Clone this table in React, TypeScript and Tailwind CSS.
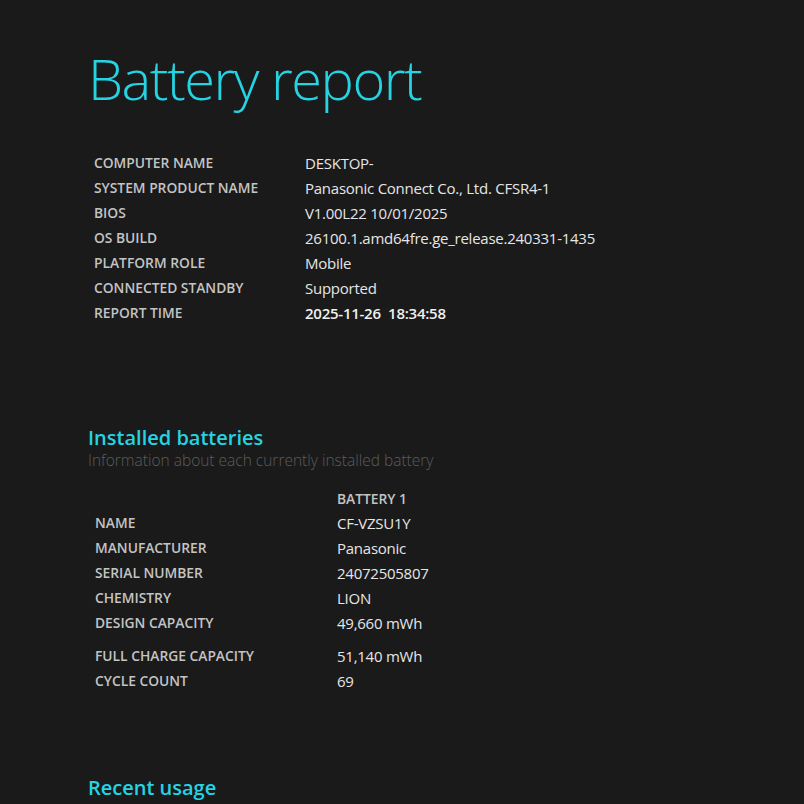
const systemInfo = [
  { label: "COMPUTER NAME", value: "DESKTOP-" },
  { label: "SYSTEM PRODUCT NAME", value: "Panasonic Connect Co., Ltd. CFSR4-1" },
  { label: "BIOS", value: "V1.00L22 10/01/2025" },
  { label: "OS BUILD", value: "26100.1.amd64fre.ge_release.240331-1435" },
  { label: "PLATFORM ROLE", value: "Mobile" },
  { label: "CONNECTED STANDBY", value: "Supported" },
];

const batteryInfo = [
  { label: "NAME", value: "CF-VZSU1Y" },
  { label: "MANUFACTURER", value: "Panasonic" },
  { label: "SERIAL NUMBER", value: "24072505807" },
  { label: "CHEMISTRY", value: "LION" },
  { label: "DESIGN CAPACITY", value: "49,660 mWh" },
];

const capacityInfo = [
  { label: "FULL CHARGE CAPACITY", value: "51,140 mWh" },
  { label: "CYCLE COUNT", value: "69" },
];

function Row({ label, value, labelWidth }: { label: string; value: string; labelWidth: string }) {
  return (
    <div className="flex h-[25px] items-center">
      <div className={`${labelWidth} shrink-0 text-[13.8px] font-semibold text-[#c4c4c4]`}>{label}</div>
      <div className="text-[15px] tracking-[-0.25px] text-[#e6e6e6]">{value}</div>
    </div>
  );
}

export default function App() {
  return (
    <div
      className="min-h-[804px] w-[804px] overflow-hidden bg-[#1a1a1a] pl-[88px]"
      style={{ fontFamily: '"Open Sans", "Noto Sans", sans-serif' }}
    >
      {/* Title */}
      <h1 className="pt-[40px] text-[56px] font-light leading-[76px] tracking-[-1.5px] text-[#26d3e3]">
        Battery report
      </h1>

      {/* System info */}
      <div className="mt-[35px] pl-[6px]">
        {systemInfo.map((row) => (
          <Row key={row.label} label={row.label} value={row.value} labelWidth="w-[211px]" />
        ))}
        <div className="flex h-[25px] items-center">
          <div className="w-[211px] shrink-0 text-[13.8px] font-semibold text-[#c4c4c4]">REPORT TIME</div>
          <div className="text-[15px] font-semibold tracking-[-0.25px] text-[#f0f0f0]">2025-11-26&nbsp;&nbsp;18:34:58</div>
        </div>
      </div>

      {/* Installed batteries */}
      <h2 className="mt-[98px] text-[20px] font-semibold leading-[28px] text-[#26d3e3]">Installed batteries</h2>
      <p className="-mt-[2px] text-[15.5px] font-light leading-[20px] text-[#5c5c5c]">
        Information about each currently installed battery
      </p>

      <div className="mt-[17px] pl-[7px]">
        <div className="flex h-[24px] items-center">
          <div className="w-[242px] shrink-0" />
          <div className="text-[13.8px] font-semibold text-[#c4c4c4]">BATTERY 1</div>
        </div>
        {batteryInfo.map((row) => (
          <Row key={row.label} label={row.label} value={row.value} labelWidth="w-[242px]" />
        ))}
        <div className="mt-[8px]">
          {capacityInfo.map((row) => (
            <Row key={row.label} label={row.label} value={row.value} labelWidth="w-[242px]" />
          ))}
        </div>
      </div>

      {/* Recent usage */}
      <h2 className="mt-[80px] text-[20px] font-semibold leading-[28px] text-[#26d3e3]">Recent usage</h2>
    </div>
  );
}
